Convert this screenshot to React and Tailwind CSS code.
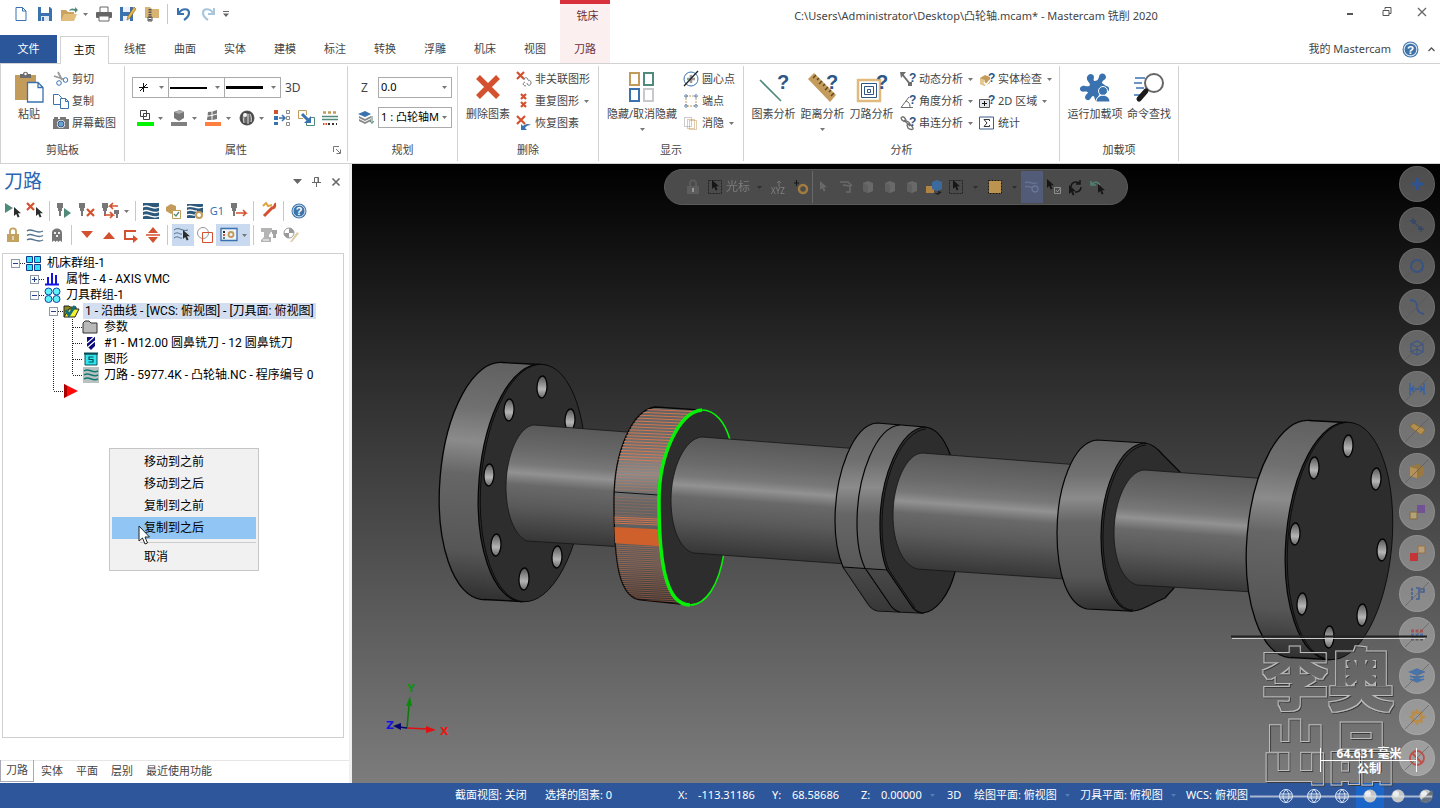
import React from 'react';

const BLUE = '#3a72b0';
const RED = '#d4512f';
const TEAL = '#4f8a7b';
const TAN = '#c39b5a';
const GRAY = '#6e6e6e';

const Svg = ({ w = 16, h = w, box, children, className = '' }) => (
  <svg width={w} height={h} viewBox={box || `0 0 ${w} ${h}`} fill="none" className={`shrink-0 overflow-visible ${className}`} aria-hidden="true">
    {children}
  </svg>
);

const Caret = ({ className = 'text-[#777]' }) => (
  <Svg w={5} h={3} className={className}><path d="M0 0h5L2.5 3z" fill="currentColor" /></Svg>
);

const Ask = ({ x = 9, y = 11, size = 12 }) => (
  <text x={x} y={y} fontSize={size} fontWeight="700" fill="#2d5687" fontFamily="Liberation Sans, sans-serif">?</text>
);

/* ---------- small icons ---------- */

const NewIcon = () => <Svg><path d="M3 1.500h6.500L13 5v9.500H3zM9.500 1.500V5H13" stroke={BLUE} fill="#fff" /></Svg>;
const SaveIcon = () => (
  <Svg><path d="M1 1h12l2 2v12H1z" fill={BLUE} /><path d="M4 1h8v6H4z" fill="#fff" /><path d="M4 10h8v5H4z" fill="#dfe8f2" /><path d="M5 11h2v4H5z" fill={BLUE} /></Svg>
);
const OpenIcon = () => (
  <Svg w={18} h={16}><path d="M1 15V4h5l2 2h6v3" fill="#caa261" /><path d="M1 15 4 8h13l-3 7z" fill="#e3bd7c" /><path d="M9 5c1-3 4-3 6-2V1l3 3-3 3V5c-2-1-4-1-6 0z" fill={TEAL} /></Svg>
);
const PrintIcon = () => (
  <Svg><path d="M4 6V1h8v5" stroke="#666" fill="#fff" /><rect x="0" y="6" width="16" height="6" rx="1" fill="#666" /><path d="M3 10h10v5H3z" fill="#fff" stroke="#666" /></Svg>
);
const SaveAsIcon = () => (
  <Svg><path d="M0 1h13v14H0z" fill={BLUE} /><path d="M3 1h7v5H3zM3 10h7v5H3z" fill="#eef" /><path d="m7 14 1-4 6-9 2 2-6 9z" fill="#e9b64d" stroke="#7c5a20" strokeWidth=".6" /></Svg>
);
const ZipIcon = () => (
  <Svg><path d="M1 1h5l2 2h7v9H1z" fill="#d9b373" /><path d="M6 3v12" stroke="#555" strokeWidth="3" strokeDasharray="1.500 1" /><path d="M4 11h4v4H4z" stroke="#555" /></Svg>
);
const UndoIcon = () => <Svg><path d="M2 2v6h6" stroke={BLUE} strokeWidth="2" /><path d="M3 7c3-5 10-5 10 0 0 3-2 5-5 7" stroke={BLUE} strokeWidth="2.200" /></Svg>;
const RedoIcon = () => <Svg><path d="M14 2v6H8" stroke="#a9c6dc" strokeWidth="2" /><path d="M13 7C10 2 3 2 3 7c0 3 2 5 5 7" stroke="#a9c6dc" strokeWidth="2.200" /></Svg>;

const PasteIcon = () => (
  <Svg w={30} h={32}><path d="M1 4h21v25H1z" fill={TAN} /><path d="M6 7V3h3c0-3 5-3 5 0h3v4z" fill="#6b6b6b" /><circle cx="11.500" cy="3" r="1.200" fill="#fff" /><path d="M13.500 11.500H24l5 5V31H13.500zM24 11.500v5h5" fill="#fff" stroke={BLUE} strokeWidth="1.300" /></Svg>
);
const CutIcon = () => (
  <Svg><path d="m5 1 4 8M1 5l9 3" stroke="#999" strokeWidth="1.800" /><circle cx="6" cy="12" r="2.300" stroke={BLUE} /><circle cx="12.500" cy="9" r="2.300" stroke={BLUE} /></Svg>
);
const CopyIcon = () => (
  <Svg><path d="M.5 1.500h5l3 3v7h-8z" stroke={BLUE} fill="#fff" /><path d="M7.500 5.500h5l3 3v7h-8zM12.500 5.500v3h3" stroke={BLUE} fill="#fff" /></Svg>
);
const CameraIcon = () => (
  <Svg><path d="M0 4h16v10H0zM1 2h4v2H1zM7 2h6v2H7z" fill="#777" /><circle cx="8" cy="9" r="4" fill="#fff" /><circle cx="8" cy="9" r="3" fill="#6fa3cf" stroke="#2d5687" /></Svg>
);

const WireColor = () => (
  <Svg w={18} h={18}><path d="M4.500 1.500h6v6h-6zM7.500 4.500h6v6h-6z" stroke="#444" /><path d="M1 13h17v4H1z" fill="#00f400" /></Svg>
);
const SolidColor = () => (
  <Svg w={18} h={18}><path d="m4 3 6-2 4 2v6l-5 3-5-3z" fill="#777" /><path d="m4 3 5 2 5-2-4-2z" fill="#aaa" /><path d="M1 13h16v4H1z" fill="#808080" /></Svg>
);
const SurfColor = () => (
  <Svg w={18} h={18}><path d="M4 3c3 0 6-1 9-2v9c-3 1-6 1-10 1z" fill="#777" /><path d="M3 7c4 0 6-1 10-2M8 2v9" stroke="#fff" /><path d="M1 13h16v4H1z" fill="#ff7f3f" /></Svg>
);
const MaterialIcon = () => (
  <Svg><circle cx="8" cy="8" r="7.500" fill="#666" /><circle cx="8" cy="8" r="6" stroke="#444" strokeWidth="1.500" /><path d="M5 13c-1-4 0-8 2-10M9 14V4M12 12c1-3 0-6-1-8" stroke="#ddd" /><circle cx="6" cy="5" r="2" fill="#f2f2f2" /></Svg>
);
const AttrIcon = () => (
  <Svg w={17} h={16}><path d="M0 0h4v4H0z" fill={RED} /><path d="M0 6h4v4H0zM0 12h4v3H0z" fill={BLUE} /><path d="M5 8h5M8 5l3 3-3 3" stroke={BLUE} strokeWidth="1.500" /><path d="M12.500.5h3v3h-3zM12.500 6.500h3v3h-3zM12.500 12.500h3v3h-3z" stroke="#888" /></Svg>
);
const MatchIcon = () => (
  <Svg w={17} h={16}><path d="M5 8.500H.5v-8h8V5" stroke={TAN} /><path d="M12 7.500h4.500v8h-8V12" stroke={TEAL} /><path d="m4 4 7 7" stroke={BLUE} strokeWidth="3" /><path d="M13 6v7H6z" fill={BLUE} /></Svg>
);
const LevelsIcon = () => (
  <Svg><path d="M1 2.500h14" stroke={TAN} strokeWidth="2.500" strokeDasharray="3 2" /><path d="M0 6.500h16M0 9.500h16" stroke={TEAL} strokeWidth="1.500" /><path d="M1 14h4" stroke={RED} strokeWidth="2" strokeDasharray="1.500 1" /><path d="M6 14h9" stroke="#333" strokeWidth="2" strokeDasharray="2 2" /></Svg>
);
const LayerIcon = () => (
  <Svg><path d="m1 9 6 3 6-3v2l-6 3-6-3zM1 6l6 3 6-3v2l-6 3-6-3z" fill="#888" /><path d="m0 4 7-3 6 3-6 3z" fill={BLUE} /><path d="M14 6v7M12 11l2 2.500 2-2.500" stroke={TEAL} /></Svg>
);

const Cross = ({ x = 0, y = 0, s = 7, sw = 2.2 }) => (
  <path d={`M${x} ${y}l${s} ${s}M${x + s} ${y}l${-s} ${s}`} stroke={RED} strokeWidth={sw} />
);
const DeleteBig = () => <Svg w={26} h={26}><Cross x={3} y={3} s={20} sw={5.5} /></Svg>;
const DelNonAssoc = () => (
  <Svg><Cross x={1} y={1} s={7} /><path d="M8 9c0-3 4-3 4 0M9 11c-3 1-2 4 1 4M11 12c0 3 4 3 4 0s-2-3-3-2" stroke="#777" /></Svg>
);
const DelDup = () => <Svg><Cross x={5} y={1} s={5} /><Cross x={5} y={9} s={5} /></Svg>;
const Undelete = () => <Svg><Cross x={1} y={1} s={8} /><path d="M5 9v6h6l-2-2c1-2 3-3 6-3-3-2-6-1-8 1z" fill={BLUE} /></Svg>;

const HideBig = () => (
  <Svg w={28} h={32}>
    <path d="M2 2h9v12H2z" stroke={TAN} strokeWidth="2" /><path d="M16 2h9v12h-9z" stroke={TEAL} strokeWidth="2" />
    <path d="M2 18h9v12H2z" stroke={BLUE} strokeWidth="2" /><path d="M16 18h9v12h-9z" stroke="#c8c8cc" strokeWidth="2" />
  </Svg>
);
const CenterPt = () => <Svg><circle cx="8" cy="8" r="7" stroke={BLUE} /><path d="M8 4v8M4 8h8" stroke="#999" strokeWidth="2.500" /><path d="M1 15 15 0" stroke="#222" strokeWidth="1.300" /></Svg>;
const EndPt = () => <Svg><path d="M3 3h10v10H3z" stroke={TAN} strokeDasharray="2 1" /><path d="M1 3h4M3 1v4M11 3h4M13 1v4M1 13h4M3 11v4M11 13h4M13 11v4" stroke={BLUE} strokeDasharray="1.500 1" /></Svg>;
const BlankIcon = () => <Svg><path d="M1.500 2.500h7v9h-7z" stroke="#999" strokeDasharray="1 1" /><path d="M6.500 5.500h7v9h-7zM4.500 4.500h7v9h-7z" stroke={TAN} strokeDasharray="1 1" /></Svg>;

const EntityBig = () => <Svg w={32} h={32}><path d="m2 9 21 21" stroke={TEAL} strokeWidth="1.600" /><Ask x={19} y={18} size={20} /></Svg>;
const RulerBig = () => (
  <Svg w={32} h={32}><path d="m1 8 6-6 22 22-6 7z" fill={TAN} /><path d="m9 4-3 3M12 7l-2 2M15 10l-3 3M18 13l-2 2M21 16l-3 3M24 19l-2 2M27 22l-3 3" stroke="#5d4520" strokeWidth="1.400" /><Ask x={19} y={18} size={20} /></Svg>
);
const PathBig = () => (
  <Svg w={32} h={32}><path d="M2 9h22v21H2z" stroke="#e0bb7d" strokeWidth="2.500" /><path d="M5.500 12.500h15v14h-15zM8.500 15.500h9v8h-9zM11.500 18.500h3v3h-3z" stroke="#2d5687" /><Ask x={20} y={18} size={20} /></Svg>
);
const DynIcon = () => <Svg><path d="m2 3 8 10" stroke={GRAY} strokeWidth="2" /><path d="M0 1h6L1 7zM8 11h4v4H8z" fill={GRAY} /><Ask /></Svg>;
const AngleIcon = () => <Svg><path d="M13 14.500H1L9 4M6 8c3 1 4 3 4 6" stroke={GRAY} /><Ask /></Svg>;
const ChainIcon = () => <Svg><path d="M1 3c2-3 4 0 5 2S4 7 2 5zM5 7c2-2 4 0 5 2M7 10c2-3 5 1 6 3s-3 2-5 0zM4 5l6 6" stroke={GRAY} strokeWidth="1.300" /><Ask /></Svg>;
const SolidCheck = () => <Svg><path d="m1 7 5-3 5 2v6l-5 3-5-2z" fill={TAN} /><path d="m1 7 5 2v6l-5-2z" fill="#e5c68f" /><path d="m5 11 2 3 4-5" stroke="#fff" strokeWidth="1.500" /><Ask /></Svg>;
const Area2D = () => <Svg><path d="M.5 6.500h10v8H.5z" stroke="#555" fill="#e3e6ea" /><path d="M5.500 8v5M3 10.500h5" stroke="#111" /><Ask /></Svg>;
const StatIcon = () => <Svg><path d="M.5 2h14v12H.5z" stroke="#3d5f8a" /><path d="M10.500 6V4.500H5L8 8l-3 3.500h5.500V10" stroke="#333" /></Svg>;
const AddinBig = () => (
  <Svg w={32} h={32}>
    <path d="M8 6c2-5 7-3 7 0 0 2-1 2 0 4 3 0 4-1 5-4 0-4 6-5 7 0 0 3-4 3-4 6l4 3c4 0 4 5 1 6-3 0-3-3-5-3l-6 12c-2-2-1-5-3-5s-2 5-6 4c-4-2-1-6 1-7-1-3-5 0-7-2-3-3 1-6 4-5 2 0 4 1 5-1 0-3-4-4-3-8z" fill={BLUE} />
    <circle cx="24" cy="20" r="4.500" fill={BLUE} stroke="#fff" /><path d="M17 31c0-9 14-9 14 0z" fill={BLUE} stroke="#fff" />
  </Svg>
);
const FindBig = () => (
  <Svg w={32} h={32}><path d="M2 7h10M1 12h8M3 17h8M1 24h6" stroke={BLUE} strokeWidth="1.600" /><circle cx="21" cy="12" r="9" stroke="#666" strokeWidth="2" fill="#fff" /><path d="m13 20-7 8" stroke="#1b1b1b" strokeWidth="5" strokeLinecap="round" /></Svg>
);

/* ---------- panel toolbar icons ---------- */

const Pointer = ({ x = 8, y = 5, fill = '#2c2c2c' }) => (
  <path d={`M${x} ${y}v9l2.200-2 1.500 3.500 1.800-.8-1.500-3.400h3z`} fill={fill} />
);
const Tool = ({ x = 1 }) => <path d={`M${x} 1h6v5h-1v3h-1v5h-2V9h-1V6h-1z`} fill="#777" />;
const SelectAll = () => <Svg w={18}><path d="m1 1 8 5-8 5z" fill={TEAL} /><Pointer x={10} y={5} /></Svg>;
const SelectBad = () => <Svg w={18}><Cross x={1} y={1} s={7} /><Pointer x={10} y={5} /></Svg>;
const RegenSel = () => <Svg w={18}><Tool /><path d="m8 6 7 5-7 5z" fill={TEAL} /></Svg>;
const RegenBad = () => <Svg w={18}><Tool /><Cross x={9} y={7} s={7} /></Svg>;
const SwapTools = () => <Svg w={18}><Tool x={0} /><path d="M16 4H8l3-3M8 4l3 3M2 13h9l-3-3M11 13l-3 3" stroke={RED} strokeWidth="1.700" /><path d="M12 8h5v4h-1v4h-2v-4h-2z" fill="#777" /></Svg>;
const Waves = ({ bg, color }) => (
  <Svg>{bg && <rect width="16" height="16" fill={bg} />}<path d="M0 4c5-4 9 4 16 0M0 8.500c5-4 9 4 16 0M0 13c5-4 9 4 16 0" stroke={color} strokeWidth="1.400" /></Svg>
);
const VerifyIcon = () => <Svg><path d="m1 4 5-3 5 2v5l-5 3-5-3z" fill={TAN} /><path d="M7.500 7.500h8v8h-8z" fill="#fff" stroke={TAN} /><path d="m9 11 2 2 3-4" stroke={TEAL} strokeWidth="1.300" /></Svg>;
const SimIcon = () => <Svg><path d="M0 1h16v9H8v5H0z" fill="#2d5a7c" /><path d="M0 4c5-3 9 3 16 0M0 8c4-3 6 1 10 0M0 12c3-2 5 1 8 0" stroke="#fff" strokeWidth="1.300" /><circle cx="12" cy="12" r="3" stroke={TAN} strokeWidth="2" fill="#fff" /></Svg>;
const PostIcon = () => <Svg w={18}><Tool /><path d="M6 11h10l-3-3M16 11l-3 3" stroke={RED} strokeWidth="1.500" /></Svg>;
const FeedIcon = () => <Svg w={18}><path d="m4 14 8-8c4 0 2-4 4-4" stroke={RED} strokeWidth="3" /><path d="m3 4 3-3 2 3 4-1" stroke="#e0a63e" strokeWidth="2" /></Svg>;
const HelpIcon = ({ size = 16 }) => (
  <Svg w={size} box="0 0 16 16"><circle cx="8" cy="8" r="7.500" fill="#3f74ab" /><circle cx="8" cy="8" r="6" stroke="#dbe7f3" /><text x="8" y="12" fontSize="11" fontWeight="700" textAnchor="middle" fill="#fff" fontFamily="Liberation Sans, sans-serif">?</text></Svg>
);
const LockIcon = ({ color = '#c3a15f' }) => <Svg><path d="M5 7V4c0-3.500 6-3.500 6 0v3" stroke={color} strokeWidth="1.800" /><path d="M2 7h12v8H2z" fill={color} /><path d="M7.500 9h1v4h-1z" fill="#fff" /></Svg>;
const GhostIcon = () => <Svg><path d="M3 15V6c0-6 10-6 10 0v9l-2-1.500L9.500 15 8 13.500 6.500 15 5 13.500z" fill="#777" /><path d="M5 5h2v2H5zM9 5h2v2H9zM7 8h2v2H7z" fill="#eee" /></Svg>;
const DownIcon = () => <Svg><path d="M2 4h12l-6 7z" fill={RED} /></Svg>;
const UpIcon = () => <Svg><path d="M2 12h12L8 5z" fill={RED} /></Svg>;
const LoopIcon = () => <Svg><path d="M13 4H2v8h9" stroke={RED} strokeWidth="2" /><path d="m10 8 5 4-5 4z" fill={RED} /></Svg>;
const ExpandIcon = () => <Svg><path d="M1 8h14" stroke={RED} strokeWidth="1.500" /><path d="M3 6h10L8 0zM3 10h10l-5 6z" fill={RED} /></Svg>;
const WavePtr = () => <Svg w={18}><path d="M0 4c5-4 8 2 14 0M0 8c4-3 6 1 8 0M0 12c4-3 6 1 8 0" stroke="#4b6a86" /><Pointer x={9} y={4} /></Svg>;
const OverlapIcon = () => <Svg><circle cx="6" cy="6" r="5.500" stroke="#999" /><path d="M5.500 5.500h10v10h-10z" stroke={RED} /></Svg>;
const PanelIcon = () => <Svg w={18}><path d="M1 2.500h16v12H1z" stroke={BLUE} fill="#eef3fa" strokeWidth="1.300" /><path d="M3 5h2v2H3z" fill="#2b2b2b" /><path d="M3 8h2v2H3z" fill={RED} /><path d="M3 11h2v2H3z" fill={TEAL} /><circle cx="11" cy="8.500" r="2.500" stroke={TAN} strokeWidth="1.800" /></Svg>;
const MachineIcon = () => <Svg><path d="M0 1h11v4h-1l-2 3v2h2v5H0v-2l3-3V5H0z" fill="#b4b4b4" /><path d="M2 13h6" stroke="#fff" /><path d="M11 3h5v4h-1v4h-3V7h-1z" fill="#a4a4a4" /></Svg>;
const ProbeIcon = () => <Svg><circle cx="6" cy="6" r="5" stroke="#999" fill="#fff" /><path d="M6 1a5 5 0 0 1 5 5H6zM6 11a5 5 0 0 1-5-5h5z" fill="#999" /><path d="m7 15 7-10 2 1.500L9 15z" fill="#e0cda4" /></Svg>;

const Sep = () => <span className="mr-1 ml-[3px] h-5 w-px bg-[#c8c8c8]" />;
const ToolBtn = ({ label, children, arrow, on }) => (
  <button type="button" aria-label={label} className={`flex h-[22px] items-center justify-center ${arrow ? 'w-[34px] gap-1' : 'w-[22px]'} ${on ? 'bg-[#c9d9ef]' : ''}`}>
    {children}
    {arrow && <Caret />}
  </button>
);

/* ---------- header ---------- */

const tabs = ['线框', '曲面', '实体', '建模', '标注', '转换', '浮雕', '机床', '视图'];

const QuickBtn = ({ label, children }) => (
  <button type="button" aria-label={label} className="flex h-7 w-6 items-center justify-center">{children}</button>
);

const TitleBar = () => (
  <div className="flex h-9 items-start">
    <div className="flex w-[560px] shrink-0 items-center pl-[9px]">
      <QuickBtn label="新建"><NewIcon /></QuickBtn>
      <QuickBtn label="保存"><SaveIcon /></QuickBtn>
      <QuickBtn label="打开"><OpenIcon /></QuickBtn>
      <button type="button" aria-label="最近文件" className="flex h-7 w-[11px] items-center pl-[2px]"><Caret /></button>
      <QuickBtn label="打印"><PrintIcon /></QuickBtn>
      <QuickBtn label="另存为"><SaveAsIcon /></QuickBtn>
      <QuickBtn label="打包"><ZipIcon /></QuickBtn>
      <Sep />
      <QuickBtn label="撤销"><UndoIcon /></QuickBtn>
      <QuickBtn label="重做"><RedoIcon /></QuickBtn>
      <button type="button" aria-label="自定义" className="flex h-7 w-3 items-center justify-center"><Svg w={6} h={6}><path d="M0 0h6v1H0zM0 2.500h6L3 6z" fill="#666" /></Svg></button>
    </div>
    <div className="h-9 w-[50px] shrink-0 border-t-4 border-[#d9303e] bg-[#fbeff0] pt-1 pl-[5px] text-center leading-4 text-[#6b3038]">铣床</div>
    <h1 className="flex-1 truncate pt-2 pl-3 text-center leading-4 text-[#444]">C:\Users\Administrator\Desktop\凸轮轴.mcam* - Mastercam 铣削 2020</h1>
    <div className="flex w-[110px] shrink-0">
      <button type="button" aria-label="最小化" className="flex h-6 w-10 items-center justify-center"><Svg w={10}><path d="M2 7h6" stroke="#555" strokeWidth="2" /></Svg></button>
      <button type="button" aria-label="还原" className="flex h-6 w-[34px] items-center justify-center"><Svg w={10}><path d="M3 2.500V.5h6v6H7M1 3.500h6v5H1z" stroke="#555" /></Svg></button>
      <button type="button" aria-label="关闭" className="flex h-6 w-9 items-center justify-center"><Svg w={10}><path d="m1 1 8 8M9 1 1 9" stroke="#666" strokeWidth="1.300" /></Svg></button>
    </div>
  </div>
);

const TabRow = () => (
  <div className="flex h-7 border-b border-[#d2d2d2]">
    <button type="button" className="-mt-px h-7 w-[57px] bg-[#2b579a] text-white">文件</button>
    <button type="button" className="ml-[3px] h-7 w-[49px] border border-b-0 border-[#d2d2d2] bg-white text-black">主页</button>
    <nav className="flex pl-px">
      {tabs.map((t) => (
        <button key={t} type="button" className="w-[50px]">{t}</button>
      ))}
      <button type="button" className="w-[50px] bg-[#fbeff0] text-[#6b3038]">刀路</button>
    </nav>
    <div className="ml-auto flex items-center pr-[5px]">
      <a href="#my" className="mr-[11px]">我的 Mastercam</a>
      <button type="button" aria-label="帮助" className="mr-[9px]"><HelpIcon size={17} /></button>
      <button type="button" aria-label="折叠功能区"><Svg w={7} h={5}><path d="m.5 4 3-3 3 3" stroke="#555" strokeWidth="1.300" /></Svg></button>
    </div>
  </div>
);

/* ---------- ribbon ---------- */

const Group = ({ title, className, pad, children, launcher }) => (
  <section className={`my-[2px] flex shrink-0 flex-col border-r border-[#d2d2d2] ${className}`}>
    <div className={`flex flex-1 pt-[2px] ${pad}`}>{children}</div>
    <div className="relative h-[19px] text-center leading-4">
      {title}
      {launcher && (
        <button type="button" aria-label="属性设置" className="absolute top-1 right-[6px]">
          <Svg w={8}><path d="M.5 6V.5H6M3 3l4 4M7.500 3.500v4h-4" stroke="#777" /></Svg>
        </button>
      )}
    </div>
  </section>
);

const Big = ({ icon, label, arrow, className }) => (
  <button type="button" className={`flex shrink-0 flex-col items-center whitespace-nowrap ${className}`}>
    <span className="flex h-[38px] items-center">{icon}</span>
    <span className="leading-4">{label}</span>
    {arrow && <span className="mt-1 flex h-[6px] items-center"><Caret /></span>}
  </button>
);

const Small = ({ icon, label, arrow }) => (
  <button type="button" className="flex h-[22px] items-center gap-[3px] whitespace-nowrap">
    {icon}
    <span>{label}</span>
    {arrow && <span className="ml-[2px]"><Caret /></span>}
  </button>
);

const StyleCombo = ({ label, className, children }) => (
  <button type="button" aria-label={label} className={`flex h-[21px] items-center justify-between border border-[#ababab] pr-1 ${className}`}>
    {children}
    <Caret />
  </button>
);

const Ribbon = () => (
  <div className="flex h-[100px] overflow-hidden border-b border-l border-[#d2d2d2] bg-white">
    <Group title="剪贴板" className="w-[124px]" pad="pl-[11px]">
      <Big icon={<PasteIcon />} label="粘贴" className="w-[34px]" />
      <div className="ml-[7px] flex flex-col items-start">
        <Small icon={<CutIcon />} label="剪切" />
        <Small icon={<CopyIcon />} label="复制" />
        <Small icon={<CameraIcon />} label="屏幕截图" />
      </div>
    </Group>

    <Group title="属性" className="w-[223px]" pad="pl-[7px]" launcher>
      <div className="pt-[9px]">
        <div className="flex items-center">
          <StyleCombo label="点样式" className="w-[37px] pl-1"><Svg w={13}><path d="M2 6.500h9M6.500 2v9M3 10l7-7" stroke="#111" /></Svg></StyleCombo>
          <StyleCombo label="线型" className="-ml-px w-[57px] pl-px"><span className="h-[2px] w-[37px] bg-black" /></StyleCombo>
          <StyleCombo label="线宽" className="-ml-px w-[57px] pl-px"><span className="h-[3px] w-[37px] bg-black" /></StyleCombo>
          <button type="button" className="ml-1 text-[12px]">3D</button>
        </div>
        <div className="mt-[9px] flex h-[22px] items-center">
          <ToolBtn label="线框颜色" arrow><WireColor /></ToolBtn>
          <ToolBtn label="实体颜色" arrow><SolidColor /></ToolBtn>
          <ToolBtn label="曲面颜色" arrow><SurfColor /></ToolBtn>
          <ToolBtn label="材质" arrow><MaterialIcon /></ToolBtn>
          <div className="flex gap-[2px] pl-[3px]">
            <ToolBtn label="设置全部"><AttrIcon /></ToolBtn>
            <ToolBtn label="匹配属性"><MatchIcon /></ToolBtn>
            <ToolBtn label="清除颜色"><LevelsIcon /></ToolBtn>
          </div>
        </div>
      </div>
    </Group>

    <Group title="规划" className="w-[110px]" pad="pl-[10px]">
      <div className="flex flex-col gap-[9px] pt-[9px]">
        <label className="flex h-[21px] items-center">
          <span className="w-5 pl-[3px] text-[12px]">Z</span>
          <span className="flex h-full w-[74px] items-center border border-[#ababab] pr-1">
            <input type="text" defaultValue="0.0" className="w-full min-w-0 pl-[2px] text-black outline-none" />
            <Caret />
          </span>
        </label>
        <label className="flex h-[21px] items-center">
          <span className="w-5"><LayerIcon /></span>
          <span className="flex h-full w-[74px] items-center border border-[#ababab] pr-1">
            <select aria-label="层别" className="w-full min-w-0 appearance-none pl-[2px] text-black outline-none">
              <option>1 : 凸轮轴M</option>
            </select>
            <Caret />
          </span>
        </label>
      </div>
    </Group>

    <Group title="删除" className="w-[141px]" pad="pl-[7px]">
      <Big icon={<DeleteBig />} label="删除图素" className="w-[46px]" />
      <div className="ml-[5px] flex flex-col items-start">
        <Small icon={<DelNonAssoc />} label="非关联图形" />
        <Small icon={<DelDup />} label="重复图形" arrow />
        <Small icon={<Undelete />} label="恢复图素" />
      </div>
    </Group>

    <Group title="显示" className="w-[145px]" pad="pl-[7px]">
      <Big icon={<HideBig />} label="隐藏/取消隐藏" className="w-[72px]" arrow />
      <div className="ml-[5px] flex flex-col items-start">
        <Small icon={<CenterPt />} label="圆心点" />
        <Small icon={<EndPt />} label="端点" />
        <Small icon={<BlankIcon />} label="消隐" arrow />
      </div>
    </Group>

    <Group title="分析" className="w-[316px]" pad="pl-[5px]">
      <Big icon={<EntityBig />} label="图素分析" className="w-[49px]" />
      <Big icon={<RulerBig />} label="距离分析" className="w-[49px]" arrow />
      <Big icon={<PathBig />} label="刀路分析" className="w-[49px]" />
      <div className="ml-1 flex flex-col items-start">
        <Small icon={<DynIcon />} label="动态分析" arrow />
        <Small icon={<AngleIcon />} label="角度分析" arrow />
        <Small icon={<ChainIcon />} label="串连分析" arrow />
      </div>
      <div className="ml-[6px] flex flex-col items-start">
        <Small icon={<SolidCheck />} label="实体检查" arrow />
        <Small icon={<Area2D />} label="2D 区域" arrow />
        <Small icon={<StatIcon />} label="统计" />
      </div>
    </Group>

    <Group title="加载项" className="w-[119px]" pad="pl-[6px]">
      <Big icon={<AddinBig />} label="运行加载项" className="w-[58px]" />
      <Big icon={<FindBig />} label="命令查找" className="w-[50px]" />
    </Group>
  </div>
);

/* ---------- toolpath tree ---------- */

const Guide = ({ kind }) => (
  <Svg w={19} h={16}>
    {(kind === 'v' || kind === 't') && <path d="M9.500 0v16" stroke="#222" strokeDasharray="1 1" />}
    {kind === 'l' && <path d="M9.500 0v8" stroke="#222" strokeDasharray="1 1" />}
    {(kind === 't' || kind === 'l') && <path d="M10 8.500h9" stroke="#222" strokeDasharray="1 1" />}
    {(kind === '-' || kind === '+') && (
      <>
        <path d="M14 8.500h5" stroke="#222" strokeDasharray="1 1" />
        <rect x="5.500" y="4.500" width="8" height="8" stroke="#8e98a8" fill="#fafafa" />
        <path d={kind === '+' ? 'M7 8.500h5M9.500 6v5' : 'M7 8.500h5'} stroke="#27408b" />
      </>
    )}
  </Svg>
);

const treeIcons = {
  machine: <path d="M1.500 1.500h6v6h-6zM9.500 1.500h6v6h-6zM1.500 9.500h6v6h-6zM9.500 9.500h6v6h-6z" fill="#35e0f5" stroke="#123a8c" />,
  props: <path d="M1 13.500h14M4 13V6M8 13V2M12 13V4" stroke="#1414e0" strokeWidth="2" />,
  group: <path d="M8 4.500a3.500 3.500 0 1 1-7 0 3.500 3.500 0 0 1 7 0zM16 4.500a3.500 3.500 0 1 1-7 0 3.500 3.500 0 0 1 7 0zM8 12a3.500 3.500 0 1 1-7 0 3.500 3.500 0 0 1 7 0zM16 12a3.500 3.500 0 1 1-7 0 3.500 3.500 0 0 1 7 0z" fill="#5ef0fb" stroke="#1542a0" />,
  open: <><path d="M1 14V3h5l1 1h6v3" fill="#8b8b1c" stroke="#222" /><path d="m1 14 5-8h10l-4 8z" fill="#f4f02a" stroke="#222" /><path d="m3 7 3 5 6-9" stroke="#12707a" strokeWidth="3" /></>,
  folder: <path d="M1 14V4l2-2h4l2 2h6v10z" fill="#b9b9b9" stroke="#333" />,
  mill: <><path d="M5 2h8v9l-4 4-4-4z" fill="#0a0a78" /><path d="m5 8 7-6M6 12l7-6" stroke="#fff" strokeWidth="1.200" /></>,
  geo: <><path d="M3 3h12v11H3z" fill="#2ee6ee" stroke="#0a4d55" /><path d="M2 2.500h14" stroke="#0a4d55" strokeWidth="2" /><path d="M11.500 6H7v2.500h4V11H6.500" stroke="#0a4d55" strokeWidth="1.200" /></>,
  nc: <><path d="M1 0h16v16H1z" fill="#b9c2c0" /><path d="M2 4c5-4 8 3 14 0M2 8c5-4 8 3 14 0M2 12c5-4 8 3 14 0" stroke="#127a72" strokeWidth="1.500" /></>,
  insert: <><path d="m1 1 14 7-14 7z" fill="#ff0a0a" /><path d="M1 1v14l3-2V3z" fill="#a00" /></>,
};

const rows = [
  { g: ['-'], icon: 'machine', text: '机床群组-1' },
  { g: ['', '+'], icon: 'props', text: '属性 - 4 - AXIS VMC' },
  { g: ['', '-'], icon: 'group', text: '刀具群组-1' },
  { g: ['', '', '-'], icon: 'open', text: '1 - 沿曲线 - [WCS: 俯视图] - [刀具面: 俯视图]', on: true },
  { g: ['', '', 'v', 't'], icon: 'folder', text: '参数' },
  { g: ['', '', 'v', 't'], icon: 'mill', text: '#1 - M12.00 圆鼻铣刀 - 12 圆鼻铣刀' },
  { g: ['', '', 'v', 't'], icon: 'geo', text: '图形' },
  { g: ['', '', 'v', 'l'], icon: 'nc', text: '刀路 - 5977.4K - 凸轮轴.NC - 程序编号 0' },
  { g: ['', '', 'l'], icon: 'insert', text: '' },
];

const Tree = () => (
  <ul className="mt-[6px] mr-[5px] ml-[2px] min-h-0 flex-1 overflow-hidden border border-[#cfcfcf] pt-px pl-[3px] font-['Roboto','Noto_Sans_CJK_SC',sans-serif] text-[12px] text-black">
    {rows.map((r, i) => (
      <li key={i} className="flex h-4 items-center whitespace-nowrap">
        {r.g.map((k, j) => <Guide key={j} kind={k} />)}
        <Svg w={19} h={16} className="mr-px">{treeIcons[r.icon]}</Svg>
        <span className={`px-[2px] leading-4 ${r.on ? 'bg-[#d3def0]' : ''}`}>{r.text}</span>
      </li>
    ))}
  </ul>
);

const menuItems = ['移动到之前', '移动到之后', '复制到之前', '复制到之后'];

const ContextMenu = () => (
  <div role="menu" className="absolute top-[284px] left-[109px] z-10 w-[150px] border border-[#c6c6c6] bg-[#f1f1f1] px-[2px] py-[2px] text-[12px] text-black">
    {menuItems.map((m) => (
      <button key={m} type="button" role="menuitem" className={`block h-[22px] w-full pl-8 text-left leading-5 ${m === '复制到之后' ? 'bg-[#91c5f4]' : ''}`}>{m}</button>
    ))}
    <hr className="my-[3px] ml-7 border-[#cdcdcd]" />
    <button type="button" role="menuitem" className="block h-[22px] w-full pl-8 text-left leading-5">取消</button>
    <Svg w={12} h={20} className="absolute top-[76px] left-[28px]"><path d="M1 1v15l3.500-3 2.500 6 2.500-1L7 12h4.500z" fill="#fff" stroke="#222" /></Svg>
  </div>
);

const SidePanel = () => (
  <aside className="relative flex w-[352px] shrink-0 flex-col border-r-[3px] border-[#f0f0f0] bg-white">
    <div className="flex h-[35px] items-center pl-1">
      <h2 className="text-[19px] text-[#2a66b3]">刀路</h2>
      <div className="ml-auto flex items-center pr-1 text-[#555]">
        <button type="button" aria-label="选项" className="flex w-5 justify-center"><Svg w={9} h={5}><path d="M0 0h9L4.500 5z" fill="#666" /></Svg></button>
        <button type="button" aria-label="固定" className="flex w-[19px] justify-center"><Svg w={9} h={10}><path d="M2.500.5h4v5h-4zM0 5.500h9M4.500 6v4" stroke="#666" /><path d="M6 0v6" stroke="#666" /></Svg></button>
        <button type="button" aria-label="关闭面板" className="flex w-[19px] justify-center"><Svg w={8}><path d="m.5.5 7 7M7.500.5l-7 7" stroke="#666" strokeWidth="1.600" /></Svg></button>
      </div>
    </div>
    <div className="flex h-6 items-center pl-[2px]">
      <ToolBtn label="选择全部操作"><SelectAll /></ToolBtn>
      <ToolBtn label="选择失效操作"><SelectBad /></ToolBtn>
      <Sep />
      <ToolBtn label="重建选择"><RegenSel /></ToolBtn>
      <ToolBtn label="重建失效"><RegenBad /></ToolBtn>
      <ToolBtn label="重建排序" arrow><SwapTools /></ToolBtn>
      <Sep />
      <ToolBtn label="模拟"><Waves bg="#2d5a7c" color="#fff" /></ToolBtn>
      <ToolBtn label="验证"><VerifyIcon /></ToolBtn>
      <ToolBtn label="模拟选项"><SimIcon /></ToolBtn>
      <ToolBtn label="后处理"><span className="text-[11px] text-[#3a72b0]">G1</span></ToolBtn>
      <ToolBtn label="输出刀具"><PostIcon /></ToolBtn>
      <Sep />
      <ToolBtn label="高速进给"><FeedIcon /></ToolBtn>
      <Sep />
      <ToolBtn label="帮助"><HelpIcon /></ToolBtn>
    </div>
    <div className="flex h-6 items-center pl-[2px]">
      <ToolBtn label="锁定"><LockIcon /></ToolBtn>
      <ToolBtn label="显示刀路"><Waves color="#55738c" /></ToolBtn>
      <ToolBtn label="关闭后处理"><GhostIcon /></ToolBtn>
      <Sep />
      <ToolBtn label="下移"><DownIcon /></ToolBtn>
      <ToolBtn label="上移"><UpIcon /></ToolBtn>
      <ToolBtn label="插入箭头"><LoopIcon /></ToolBtn>
      <ToolBtn label="展开"><ExpandIcon /></ToolBtn>
      <Sep />
      <ToolBtn label="仅显示选择刀路" on><WavePtr /></ToolBtn>
      <ToolBtn label="仅显示关联图形"><OverlapIcon /></ToolBtn>
      <ToolBtn label="显示选项" arrow on><PanelIcon /></ToolBtn>
      <Sep />
      <ToolBtn label="机床模拟"><MachineIcon /></ToolBtn>
      <ToolBtn label="编辑参考"><ProbeIcon /></ToolBtn>
    </div>
    <Tree />
    <div className="mt-[22px] flex h-[23px] items-stretch border-t border-[#e6e6e6] pb-px">
      <button type="button" className="-mt-px w-[34px] border border-t-0 border-[#a9a9b5]">刀路</button>
      {['实体', '平面', '层别', '最近使用功能'].map((t) => (
        <button key={t} type="button" className="mr-[6px] ml-[7px]">{t}</button>
      ))}
    </div>
    <ContextMenu />
  </aside>
);

/* ---------- graphics window ---------- */

const Face = ({ cx, cy, ...rest }) => (
  <ellipse cx={cx} cy={cy} rx="52" ry="119" transform={`rotate(4.800 ${cx} ${cy})`} {...rest} />
);

const Flange = ({ x, y, holes }) => (
  <g stroke="#050505" strokeWidth="1.300">
    <Face cx={x - 39} cy={y - 2} fill="url(#side)" />
    <path d={`M${x - 29} ${y - 120.500}L${x + 9} ${y - 118}L${x - 9} ${y + 118}L${x - 47} ${y + 116.500}z`} fill="url(#side)" stroke="none" />
    <path d={`M${x - 29} ${y - 120.500}L${x + 9} ${y - 118.500}M${x - 47} ${y + 116.500}L${x - 9} ${y + 118.500}`} />
    <Face cx={x} cy={y} fill="#2d2d2d" />
    <Face cx={x + 2} cy={y} fill="#2d2d2d" strokeWidth=".8" />
    {holes.map(([hx, hy]) => (
      <ellipse key={`${hx}-${hy}`} cx={hx} cy={hy} rx="5" ry="11" fill="url(#hole)" transform={`rotate(3 ${hx} ${hy})`} />
    ))}
  </g>
);

const Shaft = ({ d }) => <path d={d} fill="url(#shaft)" stroke="#151515" strokeWidth=".8" />;

// vertical extents of the toolpath passes on the first cam
const passes = [
  ...Array.from({ length: 18 }, (_, i) => ({ y: 408 + i * 3, o: 0.85 })),
  ...Array.from({ length: 10 }, (_, i) => ({ y: 462 + i * 3, o: 0.35 })),
  ...Array.from({ length: 8 }, (_, i) => ({ y: 497 + i * 3, o: 0.25 })),
  ...Array.from({ length: 4 }, (_, i) => ({ y: 517 + i * 2, o: 0.8 })),
  ...Array.from({ length: 30 }, (_, i) => ({ y: 545 + i * 2, o: 0.4 })),
];

const cam1 = 'M655 407C633 410 614 450 614 500C614 560 618 600 643 600L690 605L702 410z';

const Scene = () => (
  <svg className="absolute inset-0 h-full w-full" viewBox="352 164 1088 619" preserveAspectRatio="xMidYMid slice" fill="none" aria-label="凸轮轴">
    <defs>
      <linearGradient id="shaft" gradientUnits="userSpaceOnUse" x1="534" y1="425" x2="525.500" y2="541">
        <stop offset="0" stopColor="#595959" /><stop offset=".22" stopColor="#6a6a6a" />
        <stop offset=".34" stopColor="#787878" /><stop offset=".42" stopColor="#929292" />
        <stop offset=".52" stopColor="#696969" /><stop offset=".7" stopColor="#5a5a5a" />
        <stop offset="1" stopColor="#363636" />
      </linearGradient>
      <linearGradient id="side" x1="0" y1="0" x2="0" y2="1">
        <stop offset="0" stopColor="#606060" /><stop offset=".2" stopColor="#707070" />
        <stop offset=".34" stopColor="#8b8b8b" /><stop offset=".48" stopColor="#666" />
        <stop offset=".8" stopColor="#565656" /><stop offset="1" stopColor="#303030" />
      </linearGradient>
      <linearGradient id="hole" x1="0" y1="0" x2="0" y2="1">
        <stop offset="0" stopColor="#555" /><stop offset=".6" stopColor="#b5b5b5" /><stop offset="1" stopColor="#666" />
      </linearGradient>
      <clipPath id="camClip"><path d={cam1} /></clipPath>
    </defs>

    <Flange x={531} y={483} holes={[[542, 387], [509, 410], [570, 420], [489, 475], [496, 545], [524, 579], [557, 557]]} />
    <Shaft d="M534 425L640 433V548L527 541C515 536 506 515 506 487C506 455 519 426 534 425z" />

    <path d={cam1} fill="url(#side)" stroke="#050505" strokeWidth="1.300" />
    <g clipPath="url(#camClip)">
      {passes.map((p, i) => <path key={i} d={`M612 ${p.y}l92 4`} stroke="#e8794a" strokeWidth="1" opacity={p.o} />)}
      <path d="M612 527l60 3v17l-60-4z" fill="#cf602b" />
    </g>
    <path d="M614 492l44 3" stroke="#111" />
    <path d="M702 410C679 412 659 455 659 500C659 560 665 605 690 605C706 605 719 585 724 553L730 440C725 422 715 410 702 410z" fill="#2d2d2d" />
    <path d="M702 410C679 412 659 455 659 500C659 560 665 605 690 605" stroke="#08f008" strokeWidth="3.500" />
    <path d="M690 605C706 605 719 585 724 553M730 440C725 422 715 410 702 410" stroke="#08f008" strokeWidth="1.600" />
    <Shaft d="M702 437L860 449V565L693 553C680 549 671 528 671 500C671 468 685 438 702 437z" />

    <g stroke="#050505" strokeWidth="1.200">
      <path d="M877 423C853 425 835 473 835 521C835 540 838 555 843 567L868 604Q872 610 878 611L923 613L925 427z" fill="url(#side)" />
      <path d="M843 567l44 4l27 39l9 3l-45-2q-6-1-10-7z" fill="#3c3c3c" opacity=".6" stroke="none" />
      <path d="M900 425C876 427 857 475 857 523C857 542 859 556 865 568L891 606Q895 611 900 612M843 567l44 3" />
      <path d="M925 427C900 429 880 477 880 524C880 543 882 558 887 570L913 608Q918 613 923 613C936 612 949 595 955 572L950 454C944 438 936 428 925 427z" fill="#2d2d2d" />
      <path d="M926 429C902 431 882 477 882 524C882 543 884 558 889 570L915 608" strokeWidth=".8" />
    </g>
    <Shaft d="M922 453L1080 465V580L917 569C903 565 893 544 893 515C893 484 906 454 922 453z" />

    <g stroke="#050505" strokeWidth="1.200">
      <path d="M1097 440C1073 442 1057 487 1057 533C1057 575 1068 605 1087 609L1132 611L1145 443z" fill="url(#side)" />
      <path d="M1145 443C1119 445 1101 490 1101 537C1101 578 1113 611 1133 611C1143 611 1154 602 1165 598L1174 588L1180 472L1163 455Q1154 444 1145 443z" fill="#2d2d2d" />
      <path d="M1146 445C1121 447 1103 491 1103 537C1103 578 1115 610 1133 610" strokeWidth=".8" />
    </g>
    <Shaft d="M1144 470L1270 479V593L1137 585C1123 581 1114 560 1114 533C1114 500 1128 471 1144 470z" />

    <Flange x={1338} y={541} holes={[[1348, 446], [1314, 468], [1376, 479], [1295, 534], [1382, 550], [1302, 604], [1362, 615], [1329, 637]]} />

    <g fontFamily="DejaVu Sans, sans-serif" fontWeight="700">
      <path d="m407 728 2-22" stroke="#0a7a0a" strokeWidth="1.500" /><path d="m406 706 4-10 2 10z" fill="#0a8a0a" />
      <path d="m407 728 20 1" stroke="#e01010" strokeWidth="1.500" /><path d="m426 726 10 4-10 3z" fill="#e01010" />
      <path d="m407 728-8-1" stroke="#06066e" strokeWidth="1.500" /><path d="m401 723-8 3 8 4z" fill="#06066e" />
      <text x="407" y="692" fontSize="11" fill="#149014">Y</text>
      <text x="440" y="735" fontSize="11" fill="#f01414">X</text>
      <text x="386" y="729" fontSize="11" fill="#1414e0">Z</text>
    </g>
  </svg>
);

const roundIcons = [
  ['点', <path key="a" d="M9 3v12M3 9h12" stroke="#1b55b8" strokeWidth="3" />],
  ['线', <path key="b" d="M5 2v6M2 5h6M13 10v6M10 13h6M5 5l8 8" stroke="#27406f" strokeWidth="1.300" />],
  ['圆弧', <circle key="c" cx="9" cy="9" r="6" stroke="#274f96" strokeWidth="2" />],
  ['曲线', <path key="d" d="M2 2c6 0 7 3 7 7s2 6 7 7" stroke="#274f96" strokeWidth="1.800" />],
  ['曲面', <path key="e" d="m3 5 6-3 6 3v8l-6 3-6-3zM3 5l6 3 6-3M9 8v8M3 13l6-3 6 3" stroke="#274f96" strokeWidth="1.200" />],
  ['标注', <path key="f" d="M2 3v12M16 3v12M4 9h10M6 6 3 9l3 3M12 6l3 3-3 3" stroke="#1f5bbd" strokeWidth="1.500" />],
  ['网格', <path key="g" d="m2 5 4-3c3 4 7 2 11 7l-4 5C9 10 6 10 2 5z" fill="#d09a3a" stroke="#8b6a20" />],
  ['实体', <g key="h"><path d="m2 5 8-3 6 3v8l-7 3-7-2z" fill="#a87828" /><path d="m2 5 7 2v9l-7-2z" fill="#cf9d4d" /></g>],
  ['群组', <g key="i"><path d="M9 2h8v8H9z" fill="#6d3fa0" /><path d="M2 9h7v7H2z" fill="#ccb075" stroke="#80602c" /></g>],
  ['结果', <g key="j"><path d="M10 2h7v7h-7z" fill="#ccaa7c" stroke="#a06a30" /><path d="M2 9h8v8H2z" fill="#e01414" /></g>],
  ['层别', <path key="k" d="M4 3v3M4 7v3M4 11v4M8 3h3v11H8M12 4h4v3h-4" stroke="#274f96" strokeWidth="1.500" />],
  ['颜色', <g key="l" strokeWidth="3" strokeDasharray="3 1.500"><path d="M3 5h13" stroke="#b43b3b" /><path d="M3 9h13" stroke="#3b64b4" /><path d="M3 13h13" stroke="#444" /></g>],
  ['全部层', <path key="m" d="m2 5 7-3 7 3-7 3zM2 9l7 3 7-3M2 12l7 3 7-3" stroke="#2b67b2" fill="#2b67b2" strokeWidth="1.500" />],
  ['刀路', <g key="n"><circle cx="9" cy="9" r="4.500" stroke="#c6882c" strokeWidth="3" /><path d="M9 1v3M9 14v3M1 9h3M14 9h3M3.500 3.500l2 2M12.500 12.500l2 2M14.500 3.500l-2 2M5.500 12.500l-2 2" stroke="#c6882c" strokeWidth="2.500" /></g>],
  ['清除', <g key="o" stroke="#d02c20" strokeWidth="1.800"><circle cx="9" cy="9" r="7" /><path d="m4 4 10 10" /></g>],
];

const QuickMasks = () => (
  <div className="absolute top-[2px] right-[5px] flex flex-col gap-[5px]">
    {roundIcons.map(([label, art], i) => (
      <button key={label} type="button" aria-label={label} className="flex size-9 items-center justify-center rounded-full border border-white/10 bg-white/30">
        <span className="relative opacity-70">
          <Svg w={18}>{art}</Svg>
          {i !== 8 && i !== 9 && (
            <Svg w={26} className="absolute -top-1 -left-1"><path d="M1 25 25 1" stroke="#555" strokeWidth=".8" /></Svg>
          )}
        </span>
      </button>
    ))}
  </div>
);

const CubeSel = () => <Svg><path d="m3 4 5-2 5 2v8l-5 2-5-2z" fill="#777" /><path d="m3 4 5 2v8l-5-2z" fill="#6a6a6a" /></Svg>;
const BoxPtr = () => <Svg><path d="M1.500 1.500h13v13h-13z" stroke="#111" strokeDasharray="2 1" /><Pointer x={5} y={1} fill="#000" /></Svg>;

const SelectionBar = () => (
  <div className="absolute top-[5px] left-1/2 flex h-9 w-[464px] -translate-x-1/2 items-center rounded-full border border-[#5a5a5a] bg-[#4b4b4b] pl-[17px]">
    <div className="flex items-center opacity-70">
      <ToolBtn label="锁定光标"><LockIcon color="#666" /></ToolBtn>
      <ToolBtn label="光标选择"><BoxPtr /></ToolBtn>
      <button type="button" className="flex w-[42px] items-center gap-[7px] text-[12px] text-[#909090]">光标<Caret className="text-[#222]" /></button>
      <ToolBtn label="坐标"><Svg w={17}><path d="M8 8V2M6 4l2-2 2 2" stroke="#888" /><text x="0" y="15" fontSize="8" fill="#999" fontFamily="Noto Sans, sans-serif">XYZ</text></Svg></ToolBtn>
      <ToolBtn label="光标设置"><Svg><path d="M1 4h5M3.500 1v6" stroke="#000" /><circle cx="10" cy="10" r="4" stroke="#c8923a" strokeWidth="2.500" /></Svg></ToolBtn>
      <span className="h-8 w-px bg-[#777]" />
      <ToolBtn label="选择"><Svg><Pointer x={4} y={2} fill="#777" /></Svg></ToolBtn>
      <ToolBtn label="边界"><Svg><path d="M2 3h8l4 4M5 6l7 1v6H8" stroke="#777" strokeWidth="1.500" /></Svg></ToolBtn>
      <ToolBtn label="面"><CubeSel /></ToolBtn>
      <ToolBtn label="主体"><CubeSel /></ToolBtn>
      <ToolBtn label="背面"><CubeSel /></ToolBtn>
      <ToolBtn label="选择实体"><Svg><path d="M0 7h8v7H0z" fill="#dc9c3f" /><path d="m6 3 5-2 5 2v7l-5 2-5-2z" fill="#3878c0" /><path d="M8 14h4v-2l4 1-4 3z" fill="#111" /></Svg></ToolBtn>
      <button type="button" aria-label="选择方式" className="flex w-[38px] items-center gap-[9px] pl-[3px]"><BoxPtr /><Caret className="text-[#222]" /></button>
      <button type="button" aria-label="窗选" className="flex w-[38px] items-center gap-[9px] pl-1"><Svg><path d="M1.500 1.500h13v13h-13z" fill="#ecb352" stroke="#000" strokeDasharray="2 1" /></Svg><Caret className="text-[#222]" /></button>
      <span className="flex h-8 items-center bg-[#56628a]"><ToolBtn label="验证选择"><Svg><path d="M1 4c4-3 6 2 12 0M1 8c3-2 5 1 7 0M8 10a3 3 0 1 0 6 0 3 3 0 0 0-6 0" stroke="#7488b8" strokeWidth="1.300" /></Svg></ToolBtn></span>
      <ToolBtn label="选择最后"><Svg><Pointer x={1} y={0} fill="#000" /><path d="M8.500 8.500h6v6h-6zM10 11l1.500 2 3-4" stroke="#aaa" /></Svg></ToolBtn>
      <ToolBtn label="反选"><Svg><path d="M3 8a5 5 0 0 1 9-3M13 8a5 5 0 0 1-6 5M12 1v4h-4" stroke="#000" strokeWidth="1.500" /><Pointer x={1} y={6} fill="#000" /></Svg></ToolBtn>
      <ToolBtn label="还原选择"><Svg><path d="M1 2v4h5M2 5c3-3 6-2 8 1" stroke="#4f9a84" strokeWidth="1.600" /><Pointer x={8} y={5} fill="#000" /></Svg></ToolBtn>
    </div>
  </div>
);

/* ---------- status bar ---------- */

const Globe = () => <Svg><circle cx="8" cy="8" r="6.500" stroke="#dbe6f6" /><path d="M8 1.500c-4 4-4 9 0 13M8 1.500c4 4 4 9 0 13M2 6h12M2 10h12" stroke="#dbe6f6" /></Svg>;
const Ball = ({ half }) => <Svg><circle cx="8" cy="8" r="6.500" fill="#c3c6c4" /><circle cx="6" cy="6" r="3" fill="#eee" />{half && <path d="M2 13 14 2c2 4 1 9-3 12-3 1-7 1-9-1z" fill="#66717f" />}</Svg>;

const ViewBtn = ({ label, on, children }) => (
  <button type="button" aria-label={label} className={`flex h-full w-7 items-center justify-center ${on ? 'bg-[#1c66c9]' : ''}`}>{children}</button>
);

const StatusBar = () => (
  <footer className="flex h-[25px] shrink-0 items-center justify-end bg-[#2d569b] whitespace-nowrap text-white">
    <span className="w-[90px]">截面视图: 关闭</span>
    <span className="w-[133px]">选择的图素: 0</span>
    <span className="flex w-[94px]"><span className="w-5">X:</span>-113.31186</span>
    <span className="flex w-[89px]"><span className="w-5">Y:</span>68.58686</span>
    <span className="flex w-[86px] items-center"><span className="w-5">Z:</span>0.00000<Caret className="ml-2 text-[#5c7bb0]" /></span>
    <button type="button" className="w-[27px] text-left">3D</button>
    <button type="button" className="flex w-[106px] items-center">绘图平面: 俯视图<Caret className="ml-2 text-[#5c7bb0]" /></button>
    <button type="button" className="flex w-[106px] items-center">刀具平面: 俯视图<Caret className="ml-2 text-[#5c7bb0]" /></button>
    <button type="button" className="w-[86px] text-left">WCS: 俯视图</button>
    <ViewBtn label="线框"><Globe /></ViewBtn>
    <ViewBtn label="暗线"><Globe /></ViewBtn>
    <ViewBtn label="消隐"><Globe /></ViewBtn>
    <ViewBtn label="边框着色" on><Ball /></ViewBtn>
    <ViewBtn label="着色"><Ball /></ViewBtn>
    <ViewBtn label="透明"><Ball half /></ViewBtn>
  </footer>
);

// embossed outline lettering with the drawing scale on top
const Watermark = () => (
  <Svg w={220} h={180} box="1220 628 220 180" className="pointer-events-none absolute right-0 bottom-0 z-20">
    <defs>
      <filter id="emboss" filterUnits="userSpaceOnUse" x="1250" y="636" width="160" height="156">
        <feMorphology in="SourceAlpha" operator="dilate" radius="2" result="outer" />
        <feMorphology in="SourceAlpha" operator="dilate" radius="1" result="inner" />
        <feComposite in="outer" in2="inner" operator="out" result="edge" />
        <feOffset in="edge" dx="1" dy="1" result="low" />
        <feFlood floodColor="#3a3a3a" /><feComposite in2="low" operator="in" result="dark" />
        <feFlood floodColor="#bdbdbd" /><feComposite in2="edge" operator="in" result="light" />
        <feMerge><feMergeNode in="dark" /><feMergeNode in="light" /></feMerge>
      </filter>
    </defs>
    <path d="M1231 636.500h196" stroke="#222" strokeWidth="2" /><path d="M1232 638.500h193" stroke="#ccc" />
    <path d="M1250 796.500h182" stroke="#dfe3ea" strokeWidth="2" opacity=".7" />
    <g filter="url(#emboss)" fill="#fff" fontFamily="Noto Sans CJK SC, sans-serif" fontWeight="700" fontSize="66">
      <text x="1262" y="704">李奥</text>
      <text x="1262" y="777">出品</text>
    </g>
    <path d="M1320.500 748v24M1416.500 748v24M1321 760.500h95" stroke="#fff" />
    <g fill="#fff" fontFamily="Noto Sans, Noto Sans CJK SC, sans-serif" fontWeight="700" fontSize="12" textAnchor="middle">
      <text x="1369" y="758">64.631 毫米</text>
      <text x="1369" y="773">公制</text>
    </g>
  </Svg>
);

const App = () => (
  <div className="relative flex h-screen flex-col overflow-hidden bg-white font-['Noto_Sans','Noto_Sans_CJK_SC',sans-serif] text-[11px] text-[#444]">
    <header className="shrink-0">
      <TitleBar />
      <TabRow />
      <Ribbon />
    </header>
    <div className="flex min-h-0 flex-1">
      <SidePanel />
      <main className="relative min-w-0 flex-1 overflow-hidden bg-[linear-gradient(#000,#2a2a2a_32%,#7c7c7c)]">
        <Scene />
        <SelectionBar />
        <QuickMasks />
      </main>
    </div>
    <StatusBar />
    <Watermark />
  </div>
);

export default App;
